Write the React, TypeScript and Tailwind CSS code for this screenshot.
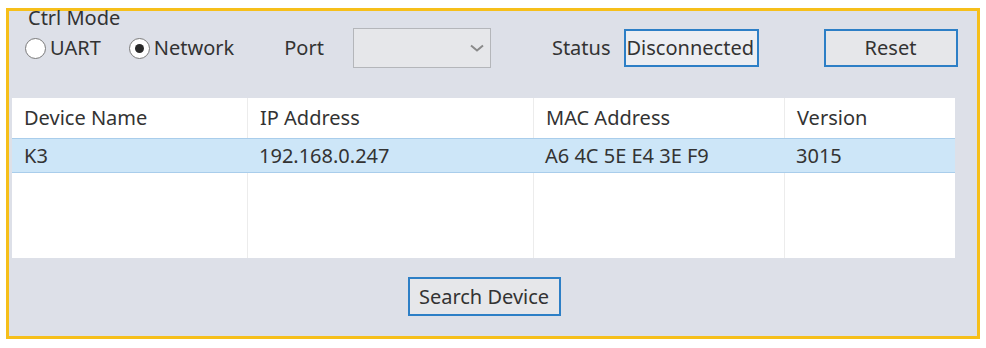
import React from 'react'

type Device = {
  name: string
  ip: string
  mac: string
  version: string
}

const devices: Device[] = [
  { name: 'K3', ip: '192.168.0.247', mac: 'A6 4C 5E E4 3E F9', version: '3015' },
]

const columns = [
  { label: 'Device Name', width: 'w-[235px]' },
  { label: 'IP Address', width: 'w-[286px]' },
  { label: 'MAC Address', width: 'w-[251px]' },
  { label: 'Version', width: 'flex-1' },
]

function Radio({ label, checked }: { label: string; checked?: boolean }) {
  return (
    <label className="flex items-center gap-[4px]">
      <span className="w-[21px] h-[21px] rounded-full border-[1.5px] border-[#7a7a7a] bg-white flex items-center justify-center">
        {checked && <span className="w-[9px] h-[9px] rounded-full bg-[#2a2a2a]" />}
      </span>
      <span>{label}</span>
    </label>
  )
}

export default function App() {
  return (
    <div
      className="w-[986px] h-[348px] bg-white pt-[8px] pl-[6px] text-[20px] text-[#333]"
      style={{ fontFamily: '"Noto Sans", "Open Sans", sans-serif' }}
    >
      <div className="w-[974px] h-[331px] border-[3px] border-[#f6bf1a] bg-[#dde0e8] flex flex-col">
        {/* top controls */}
        <div className="pl-[19px] h-[20px] leading-[20px] -mt-[3px]">Ctrl Mode</div>
        <div className="flex items-center h-[40px] pl-[16px]">
          <div className="flex items-center gap-[28px]">
            <Radio label="UART" />
            <Radio label="Network" checked />
          </div>
          <span className="ml-[50px]">Port</span>
          <div className="ml-[29px] w-[138px] h-[40px] bg-[#e6e7ea] border border-[#b4b6ba] flex items-center justify-end pr-[6px]">
            <svg width="14" height="8" viewBox="0 0 14 8" fill="none">
              <path d="M1 1.5 L7 6.5 L13 1.5" stroke="#8a8a8a" strokeWidth="2" />
            </svg>
          </div>
          <span className="ml-[61px]">Status</span>
          <div className="ml-[13px] w-[135px] h-[38px] border-2 border-[#2d7fc6] bg-[#eceef2] flex items-center pl-[1px]">
            Disconnected
          </div>
          <button className="ml-[65px] w-[134px] h-[38px] border-2 border-[#2d7fc6] bg-[#e6e7ea] flex items-center justify-center">
            Reset
          </button>
        </div>

        {/* device table */}
        <div className="mt-[30px] ml-[3px] w-[943px] h-[160px] bg-white flex flex-col">
          <div className="flex h-[40px]">
            {columns.map((c, i) => (
              <div
                key={c.label}
                className={`${c.width} ${i > 0 ? 'border-l border-[#ececec]' : ''} flex items-center pl-[12px]`}
              >
                {c.label}
              </div>
            ))}
          </div>
          {devices.map(d => (
            <div key={d.ip} className="flex h-[35px] bg-[#cde6f8] border-y border-[#a9cdeb]">
              <div className="w-[235px] flex items-center pl-[12px]">{d.name}</div>
              <div className="w-[286px] flex items-center pl-[12px]">{d.ip}</div>
              <div className="w-[251px] flex items-center pl-[12px]">{d.mac}</div>
              <div className="flex-1 flex items-center pl-[12px]">{d.version}</div>
            </div>
          ))}
          <div className="flex flex-1">
            <div className="w-[235px]" />
            <div className="w-[286px] border-l border-[#ececec]" />
            <div className="w-[251px] border-l border-[#ececec]" />
            <div className="flex-1 border-l border-[#ececec]" />
          </div>
        </div>

        <div className="flex justify-center pr-[18px] mt-[19px]">
          <button className="w-[153px] h-[39px] border-2 border-[#2d7fc6] bg-[#e6e7ea] flex items-center justify-center">
            Search Device
          </button>
        </div>
      </div>
    </div>
  )
}
